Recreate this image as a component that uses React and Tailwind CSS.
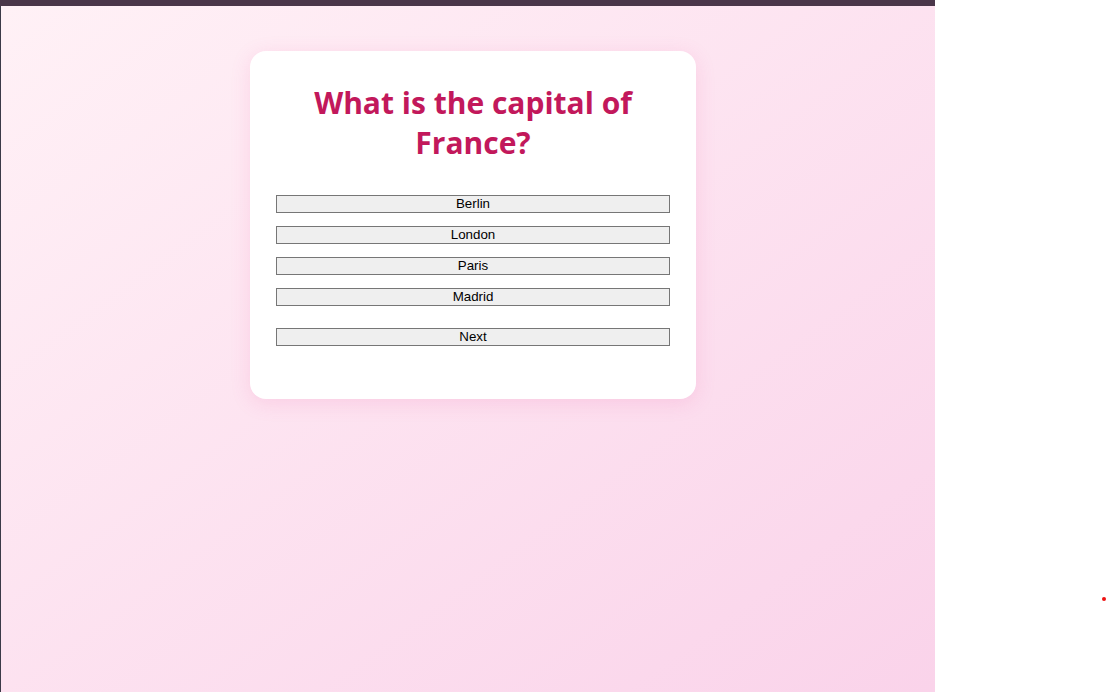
export default function App() {
  const options = ["Berlin", "London", "Paris", "Madrid"];
  return (
    <div className="relative flex h-[692px] w-[1107px] overflow-hidden bg-white">
      <div className="flex h-full w-[935px] flex-col">
        <div className="h-[6px] w-full bg-[#4a3649]" />
        <div className="flex flex-1">
          <div className="w-px bg-[#3b3a48]" />
          <div className="flex flex-1 justify-center bg-gradient-to-br from-[#fff1f6] to-[#fad3ea] pt-[45px]">
            <div className="ml-[10px] h-fit w-[446px] rounded-2xl bg-white px-[26px] pb-[52px] pt-[32px] shadow-[0_4px_20px_rgba(236,72,153,0.15)]">
              <h2 className="mb-[32px] text-center text-[30px] font-bold leading-[40px] text-[#c2185b] [font-family:'Open_Sans',sans-serif]">
                What is the capital of France?
              </h2>
              <div className="flex flex-col gap-[13px]">
                {options.map((o) => (
                  <button
                    key={o}
                    className="h-[18px] w-full border border-[#767676] bg-[#efefef] text-[13.33px] leading-[16px] text-black [font-family:'Liberation_Sans',Arial,sans-serif]"
                  >
                    {o}
                  </button>
                ))}
              </div>
              <button className="mt-[22px] h-[18px] w-full border border-[#767676] bg-[#efefef] text-[13.33px] leading-[16px] text-black [font-family:'Liberation_Sans',Arial,sans-serif]">
                Next
              </button>
            </div>
          </div>
        </div>
      </div>
      <div className="flex-1 bg-white" />
      <div className="absolute left-[1102px] top-[597px] h-[4px] w-[4px] rounded-full bg-[#ee1111]" />
    </div>
  );
}
